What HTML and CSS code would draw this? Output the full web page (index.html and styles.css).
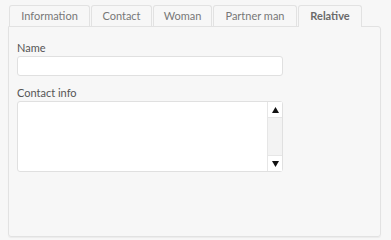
FILE: index.html
```html
<!DOCTYPE html>
<html lang="en">

<head>
    <meta charset="UTF-8">
    <meta name="viewport" content="width=device-width, initial-scale=1.0">
    <title>Relative</title>
    <link rel="stylesheet" href="styles.css">
</head>

<body>
    <main>
        <div class="tabs">
            <div class="tab tab-info">Information</div>
            <div class="tab tab-contact">Contact</div>
            <div class="tab tab-woman">Woman</div>
            <div class="tab tab-partner">Partner man</div>
            <div class="tab tab-relative is-active">Relative</div>
        </div>
        <div class="panel">
            <label class="label">Name</label>
            <div class="input"></div>

            <label class="label">Contact info</label>
            <div class="textarea">
                <div class="textarea-body"></div>
                <div class="scrollbar">
                    <div class="scroll-btn">
                        <svg width="7" height="6" viewBox="0 0 7 6"><polygon points="3.5,0 7,6 0,6" fill="#111" /></svg>
                    </div>
                    <div class="scroll-track"></div>
                    <div class="scroll-btn">
                        <svg width="7" height="6" viewBox="0 0 7 6"><polygon points="0,0 7,0 3.5,6" fill="#111" /></svg>
                    </div>
                </div>
            </div>
        </div>
    </main>
</body>

</html>
```

FILE: styles.css
```css
html {
    font-family: "Lato", "Open Sans", sans-serif;
    font-size: 11px;
    color: #666;
}

body {
    margin: 0;
    min-height: 100vh;
    background-color: #f7f7f7;
}

main {
    padding: 5px 10px 0 8px;
}

.tabs {
    display: flex;
    gap: 1px;
    padding-left: 1px;
}

.tab {
    box-sizing: border-box;
    flex-shrink: 0;
    height: 21px;
    line-height: 20px;
    text-align: center;
    white-space: nowrap;
    border: 1px solid #e2e2e2;
    border-bottom: 0;
    border-radius: 3px 3px 0 0;
    color: #777;
    background-color: #f7f7f7;
}

.tab-info { width: 81px; }
.tab-contact { width: 61px; }
.tab-woman { width: 59px; }
.tab-partner { width: 84px; }
.tab-relative { width: 64px; }

.tab.is-active {
    position: relative;
    height: 22px;
    margin-bottom: -1px;
    font-weight: 700;
    color: #6a6a6a;
    z-index: 1;
}

.panel {
    box-sizing: border-box;
    height: 211px;
    padding: 14px 9px 0 8px;
    border: 1px solid #e2e2e2;
    border-radius: 0 3px 3px 3px;
    box-shadow: 0 1px 1px rgba(0, 0, 0, 0.05);
}

.label {
    display: block;
    height: 14px;
    line-height: 14px;
    margin-bottom: 1px;
    color: #555;
}

.input {
    width: 264px;
    height: 18px;
    margin-bottom: 10px;
    background-color: #fff;
    border: 1px solid #e0e0e0;
    border-radius: 3px;
}

.textarea {
    display: flex;
    width: 264px;
    height: 69px;
    background-color: #fff;
    border: 1px solid #e0e0e0;
    border-radius: 3px;
}

.textarea-body {
    flex: 1;
}

.scrollbar {
    width: 14px;
    display: flex;
    flex-direction: column;
    border-left: 1px solid #e6e6e6;
}

.scroll-btn {
    height: 15px;
    display: flex;
    align-items: center;
    justify-content: center;
    background-color: #fff;
}

.scroll-track {
    flex: 1;
    background-color: #f3f3f3;
    border-top: 1px solid #e6e6e6;
    border-bottom: 1px solid #e6e6e6;
}
```
